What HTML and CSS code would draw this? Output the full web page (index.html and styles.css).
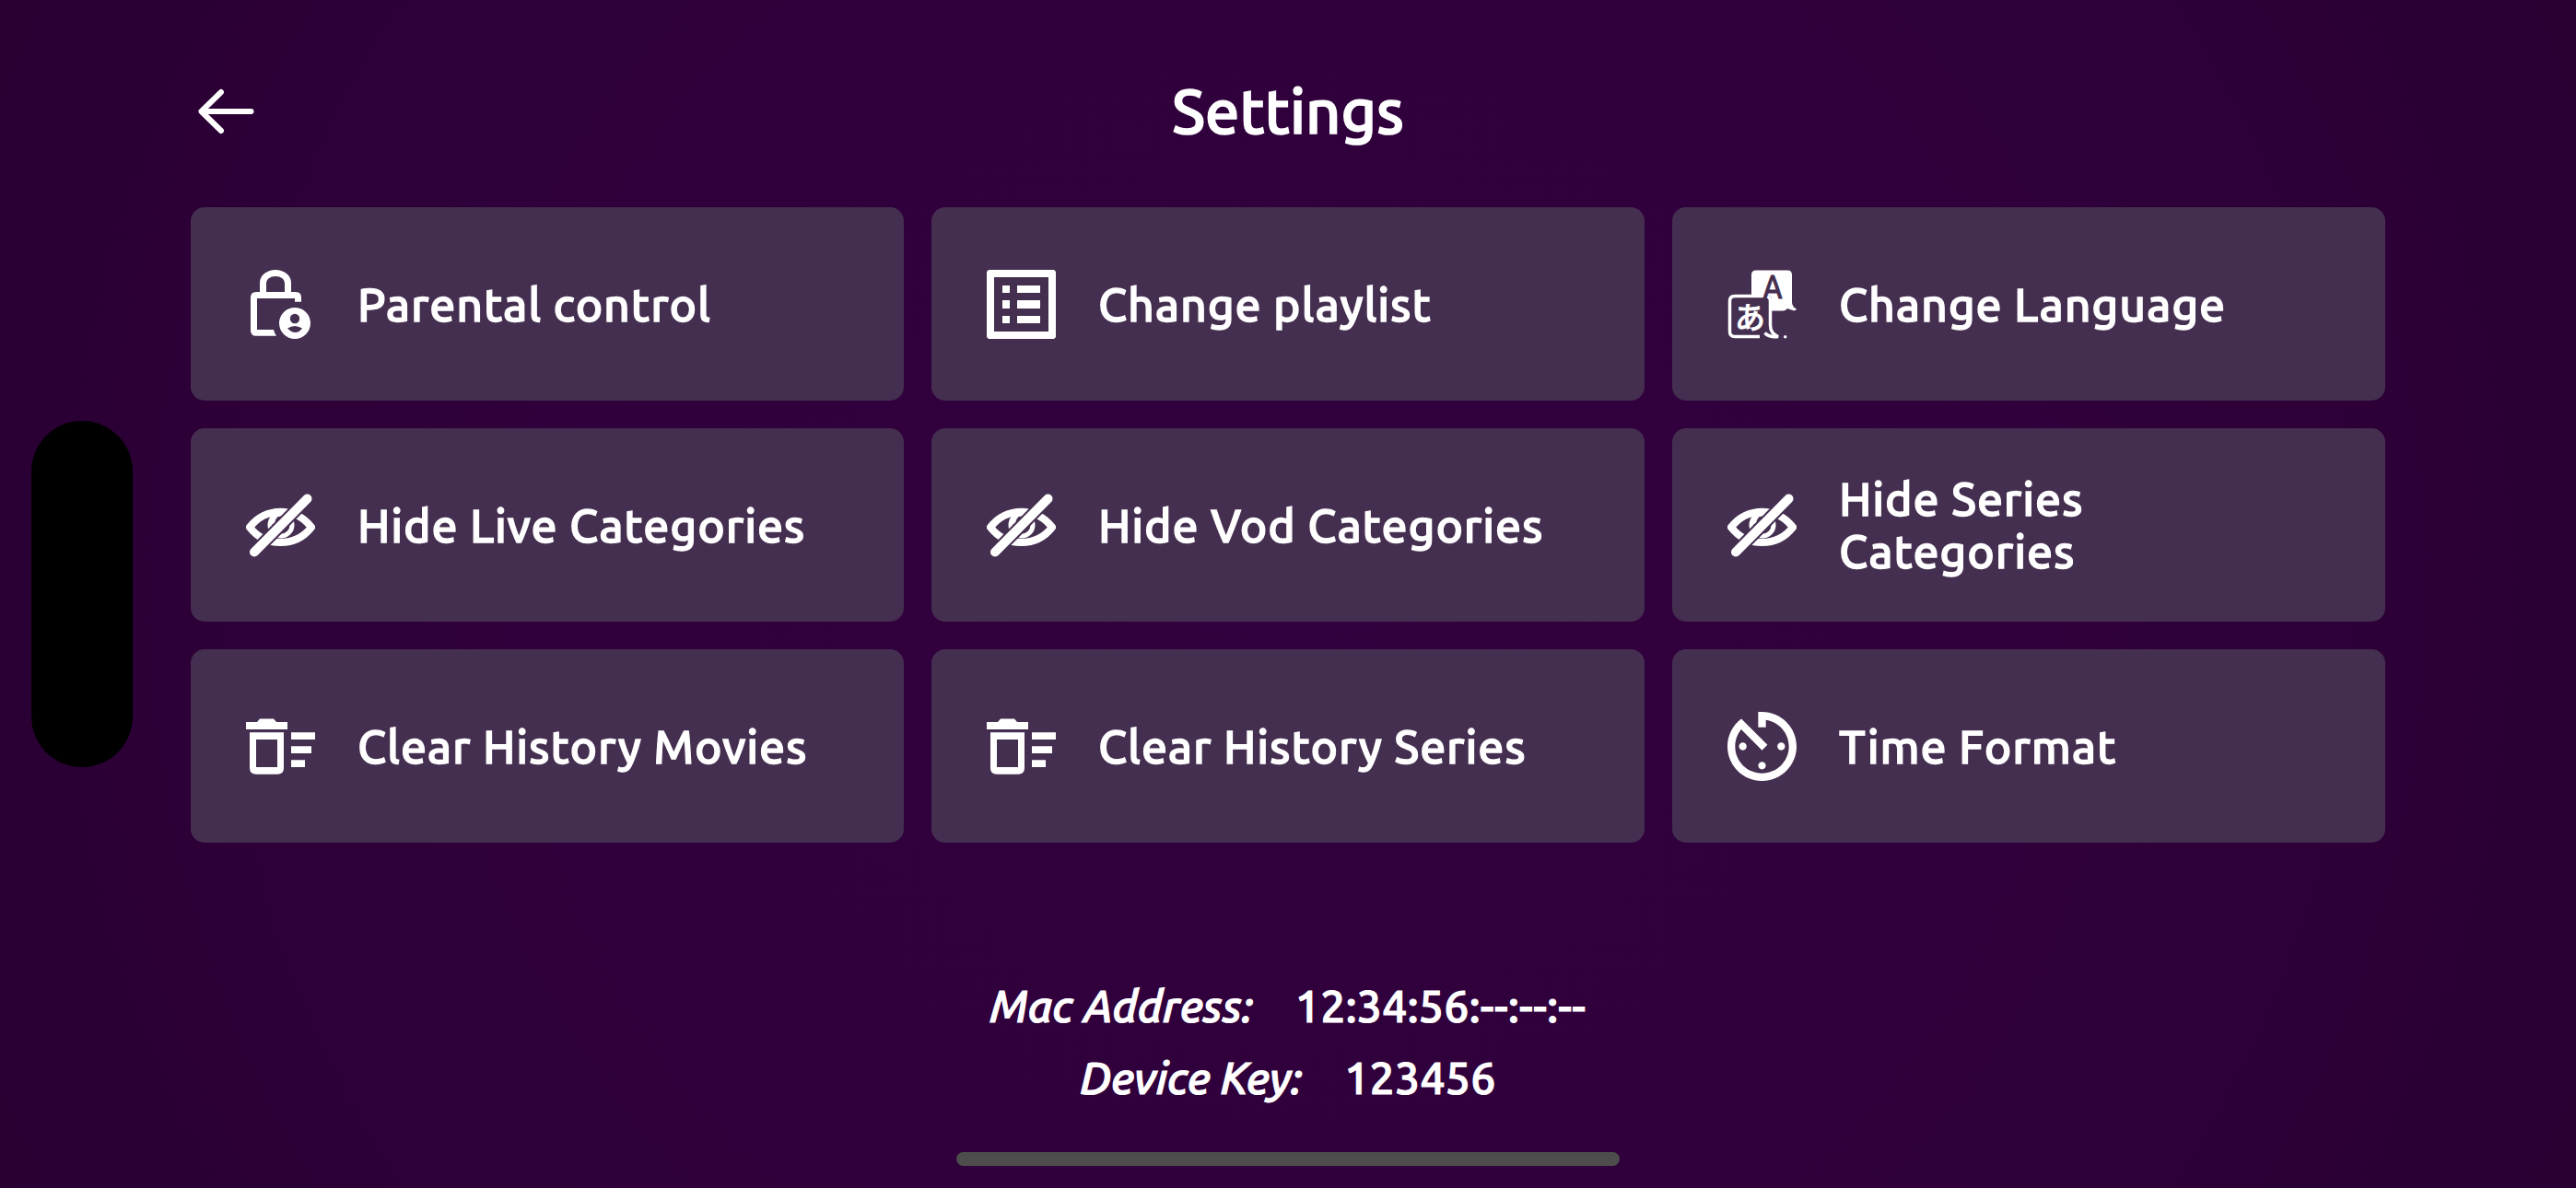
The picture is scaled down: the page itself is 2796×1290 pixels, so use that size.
FILE: index.html
```html
<!DOCTYPE html>
<html lang="en">
<head>
    <meta charset="UTF-8">
    <meta name="viewport" content="width=device-width, initial-scale=1.0">
    <title>Settings</title>
    <link rel="stylesheet" href="styles.css">
</head>
<body>
    <!-- shared icons -->
    <svg class="sprite" width="0" height="0">
        <symbol id="hide" viewBox="0 0 75 75">
            <path class="line" d="M4 39.500C21 17 54 17 71 39.500C54 61.500 21 61.500 4 39.500Z" stroke-width="8"/>
            <circle class="line" cx="38" cy="37" r="12" stroke-width="5"/>
            <path class="line" d="M29 36q-1-5 3-9" stroke-width="5.500"/>
            <path class="cut" d="M6 69.500L70 5" stroke-width="14"/>
            <path class="line" d="M9 66.500L66.500 8.500" stroke-width="10" stroke-linecap="round"/>
        </symbol>
        <symbol id="clear" viewBox="0 0 75 75">
            <path d="M0 11h12l3-3.500h15l3 3.500h12v8H0z"/>
            <path fill-rule="evenodd" d="M4 22.300h37V61q0 6.700-7 6.700H11q-7 0-7-6.700zM11 30v30h23V30z"/>
            <path d="M49 22.300h26V30H49zM49 37.300h22V45H49zM49 52.300h15V60H49z"/>
        </symbol>
    </svg>

    <div class="header">
        <button class="back">
            <svg viewBox="0 0 62 50"><path d="M26 4L4.500 25L26 46M5 25h53.500"/></svg>
        </button>
        <h1>Settings</h1>
    </div>

    <div class="grid">
        <div class="card">
            <svg class="icon" viewBox="0 0 75 75">
                <path class="line" d="M18.500 27V14a13.500 10.500 0 0 1 27 0v13" stroke-width="7"/>
                <path d="M11 24h43q6 0 6 6v4.700h-7V31H12v34h18q1 4 3 6.700H11q-6 0-6-6V30q0-6 6-6z"/>
                <circle cx="53" cy="58" r="17"/>
                <circle class="hole" cx="53" cy="53" r="5.200"/>
                <path class="hole" d="M45 63.500q8-5 16 0q-7 9-16 0z"/>
            </svg>
            <span>Parental control</span>
        </div>
        <div class="card">
            <svg class="icon" viewBox="0 0 75 75">
                <path fill-rule="evenodd" d="M2 0h71l2 2v71l-2 2H2l-2-2V2zM8 8v59h59V8z"/>
                <path d="M17 17h8v8h-8zM33 17h25v8H33zM17 33h8v9h-8zM33 33h25v9H33zM17 50h8v8h-8zM33 50h25v8H33z"/>
            </svg>
            <span>Change playlist</span>
        </div>
        <div class="card">
            <svg class="icon" viewBox="0 0 75 75">
                <path d="M31 .500h34q5 0 5 5V36q1 5 5 6.500q-1 2.500-4 1.500l-6-2q-2 2.500-5 2.500H48V33q0-6-6-6H26V5.500q0-5 5-5z"/>
                <path class="line" d="M35 72.500H8q-5.500 0-5.500-5.500V34q0-5.500 5.500-5.500h33q5.500 0 5.500 5.500v26q0 9 8.500 12.500q-10 1-14.500-4" stroke-width="3.500"/>
                <text class="latin" x="38.500" y="31" textLength="21" lengthAdjust="spacingAndGlyphs">A</text>
                <text class="kana" x="24.500" y="63.500" text-anchor="middle">あ</text>
                <circle cx="62.700" cy="72.700" r="1.700"/>
            </svg>
            <span>Change Language</span>
        </div>
        <div class="card">
            <svg class="icon"><use href="#hide"/></svg>
            <span>Hide Live Categories</span>
        </div>
        <div class="card">
            <svg class="icon"><use href="#hide"/></svg>
            <span>Hide Vod Categories</span>
        </div>
        <div class="card">
            <svg class="icon"><use href="#hide"/></svg>
            <span>Hide Series<br>Categories</span>
        </div>
        <div class="card">
            <svg class="icon"><use href="#clear"/></svg>
            <span>Clear History Movies</span>
        </div>
        <div class="card">
            <svg class="icon"><use href="#clear"/></svg>
            <span>Clear History Series</span>
        </div>
        <div class="card">
            <svg class="icon" viewBox="3 3 18 18">
                <path d="M11 17c0 .55.45 1 1 1s1-.45 1-1-.45-1-1-1-1 .45-1 1zm0-14v4h2V5.080c3.390.49 6 3.390 6 6.920 0 3.870-3.130 7-7 7s-7-3.130-7-7c0-1.680.59-3.220 1.580-4.420L12 13l1.410-1.410-6.800-6.800v.02C4.420 6.450 3 9.050 3 12c0 4.970 4.020 9 9 9 4.970 0 9-4.030 9-9s-4.030-9-9-9h-1zm7 9c0-.55-.45-1-1-1s-1 .45-1 1 .45 1 1 1 1-.45 1-1zM6 12c0 .55.45 1 1 1s1-.45 1-1-.45-1-1-1-1 .45-1 1z"/>
            </svg>
            <span>Time Format</span>
        </div>
    </div>

    <div class="device-info">
        <p><em>Mac Address:</em><span>12:34:56:--:--:--</span></p>
        <p><em>Device Key:</em><span>123456</span></p>
    </div>

    <div class="notch"></div>
    <div class="home-indicator"></div>
</body>
</html>
```

FILE: styles.css
```css
* {
    margin: 0;
    padding: 0;
    box-sizing: border-box;
}

html, body {
    height: 100%;
    overflow: hidden;
}

body {
    position: relative;
    padding: 0 207px;
    font-family: 'Ubuntu', 'Noto Sans', 'Noto Sans CJK JP', sans-serif;
    font-weight: 500;
    color: #fff;
    background: radial-gradient(circle at center, #31003e 0%, #30003c 45%, #2d0037 75%, #280032 100%);
}

.sprite {
    position: absolute;
}

.header {
    display: grid;
    grid-template-columns: 200px 1fr 200px;
    align-items: center;
    height: 225px;
    padding-top: 17px;
}

.back {
    width: 62px;
    height: 50px;
    margin-left: 7px;
    border: none;
    background: none;
    cursor: pointer;
}

.back svg {
    display: block;
    width: 62px;
    height: 50px;
    fill: none;
    stroke: #fff;
    stroke-width: 6;
    stroke-linecap: round;
    stroke-linejoin: round;
}

h1 {
    font-size: 66.5px;
    font-weight: 500;
    line-height: 76px;
    text-align: center;
    -webkit-text-stroke: 1.6px #fff;
}

.grid {
    display: grid;
    grid-template-columns: repeat(3, 774px);
    grid-auto-rows: 210px;
    gap: 30px;
}

.card {
    display: flex;
    align-items: center;
    gap: 46px;
    padding: 0 60px;
    border-radius: 15px;
    background-color: #452f50;
    font-size: 50px;
    line-height: 57px;
    letter-spacing: 0.85px;
    white-space: nowrap;
}

.card span {
    -webkit-text-stroke: 1.3px #fff;
}

.icon {
    flex: none;
    width: 75px;
    height: 75px;
    margin-top: 1px;
    fill: #fff;
    letter-spacing: 0;
}

.line {
    fill: none;
    stroke: #fff;
}

.cut {
    fill: none;
    stroke: #452f50;
}

.hole {
    fill: #452f50;
}

.latin {
    font-size: 36px;
    fill: #452f50;
    stroke: #452f50;
    stroke-width: 0.8;
}

.kana {
    font-family: 'Noto Sans CJK JP', sans-serif;
    font-size: 33px;
    stroke: #fff;
    stroke-width: 0.7;
}

.device-info {
    display: flex;
    flex-direction: column;
    align-items: center;
    margin-top: 138px;
    font-size: 48px;
    line-height: 78px;
    -webkit-text-stroke: 1.2px #fff;
}

.device-info p {
    display: flex;
    gap: 46px;
}

.device-info em {
    letter-spacing: -0.2px;
}

.device-info span {
    letter-spacing: 0.35px;
}

.notch {
    position: absolute;
    left: 34px;
    top: 457px;
    width: 110px;
    height: 376px;
    border-radius: 55px;
    background-color: #000;
}

.home-indicator {
    position: absolute;
    left: 1038px;
    bottom: 24px;
    width: 720px;
    height: 15px;
    border-radius: 8px;
    background-color: #4d4d4d;
}
```
